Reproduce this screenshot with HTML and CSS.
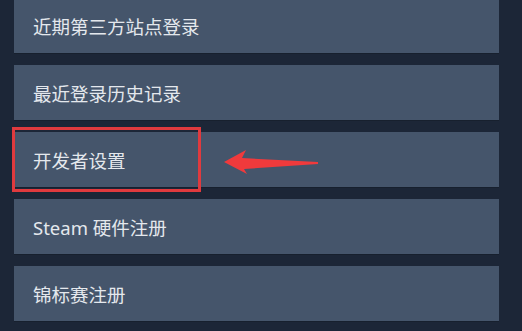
FILE: index.html
```html
<!DOCTYPE html>
<html lang="zh-CN">
<head>
<meta charset="utf-8">
<link rel="stylesheet" href="styles.css">
</head>
<body>
<div class="page">
  <div class="list">
    <div class="item">近期第三方站点登录</div>
    <div class="item">最近登录历史记录</div>
    <div class="item">开发者设置</div>
    <div class="item">Steam 硬件注册</div>
    <div class="item">锦标赛注册</div>
  </div>
  <div class="highlight"></div>
  <svg class="arrow" width="100" height="30" viewBox="220 150 100 30">
    <polygon points="224,164 246,152 242,160 318,164 318,166 244,171 247,176" fill="#f03a3c"/>
  </svg>
</div>
</body>
</html>
```
FILE: styles.css
```css
html, body {
  margin: 0;
  padding: 0;
  background: #1c2637;
}
body {
  width: 522px;
  height: 331px;
  overflow: hidden;
  font-family: "Noto Sans", "Noto Sans CJK SC", sans-serif;
}
.page {
  position: relative;
  width: 522px;
  height: 331px;
}
.list {
  display: flex;
  flex-direction: column;
  gap: 12px;
  padding-left: 14px;
  width: 485px;
  margin-top: -2px;
}
.item {
  height: 55px;
  background: #45556b;
  color: #e4e8ed;
  font-size: 18.5px;
  display: flex;
  align-items: center;
  padding-left: 19px;
  box-sizing: border-box;
  box-shadow: 0 1px 0 rgba(0,0,0,0.15);
}
.highlight {
  position: absolute;
  left: 12px;
  top: 129px;
  width: 189px;
  height: 65px;
  border: 3px solid #e03a3e;
  box-sizing: border-box;
}
.arrow {
  position: absolute;
  left: 220px;
  top: 150px;
}
```
